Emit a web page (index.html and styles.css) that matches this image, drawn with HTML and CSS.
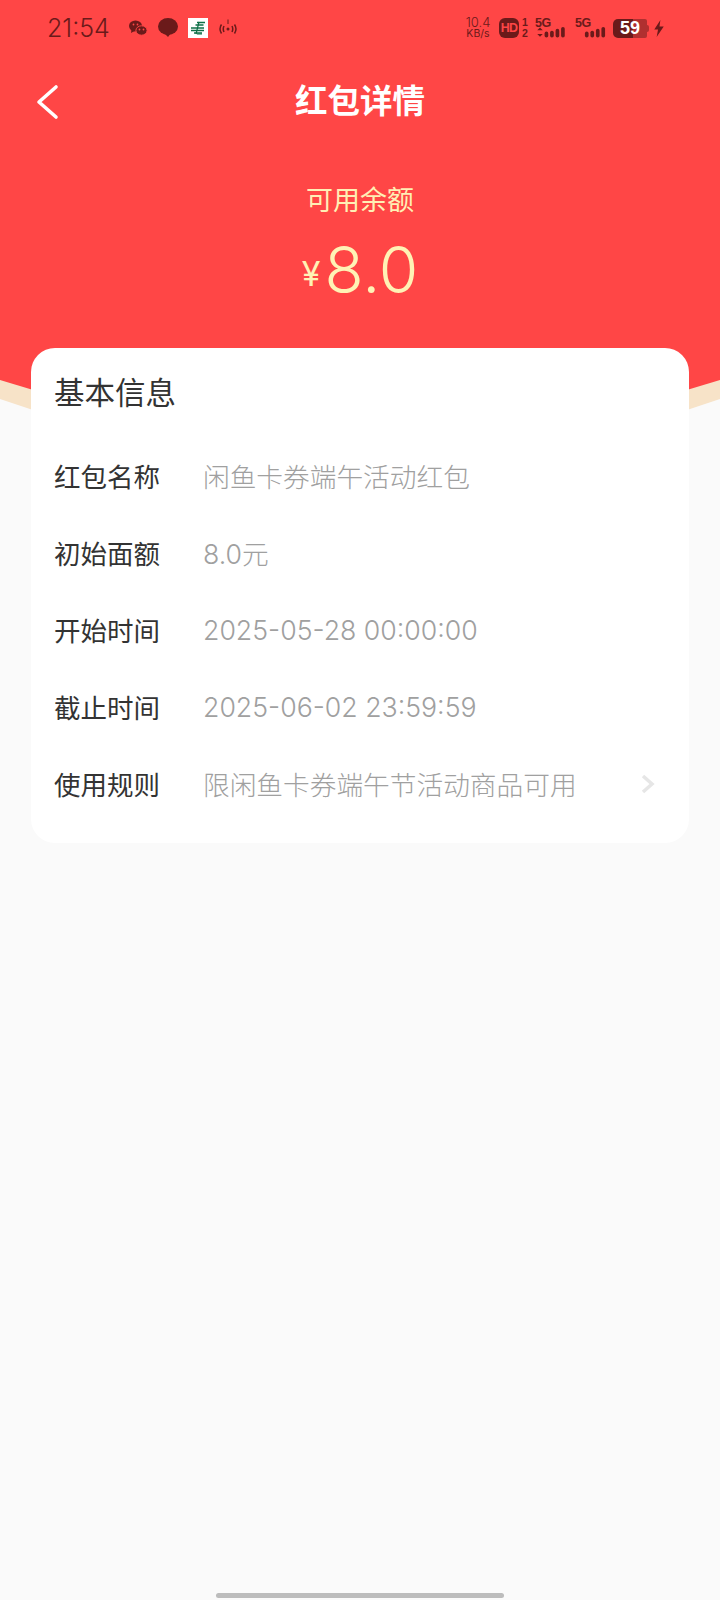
FILE: index.html
```html
<!DOCTYPE html>
<html lang="zh-CN">
<head>
<meta charset="utf-8">
<title>红包详情</title>
<link rel="stylesheet" href="styles.css">
</head>
<body>
<div class="page">
  <svg class="backdrop" width="720" height="420" viewBox="0 0 720 420" aria-hidden="true">
    <rect x="0" y="0" width="720" height="420" fill="#fafafa"/>
    <path d="M0 399 Q360 525 720 399 V300 H0 Z" fill="#f7e3c8"/>
    <path d="M0 380 Q360 495 720 380 V0 H0 Z" fill="#ff4646"/>
  </svg>
  <header class="hero">
    <div class="status">
      <div class="status-left">
        <span class="clock">21:54</span>
        <svg class="ic wechat" width="20" height="18" viewBox="0 0 20 18"><ellipse cx="7.5" cy="7" rx="6.5" ry="5.6" fill="#6b1a1a"/><path d="M3.5 10.5 3 14l3.5-2z" fill="#6b1a1a"/><ellipse cx="13.5" cy="11.5" rx="5.6" ry="4.7" fill="#6b1a1a" stroke="#ff4646" stroke-width="1"/><circle cx="11.5" cy="10.5" r=".9" fill="#ff4646"/><circle cx="15.5" cy="10.5" r=".9" fill="#ff4646"/><circle cx="5.5" cy="5.5" r=".9" fill="#ff4646"/><circle cx="9.5" cy="5.5" r=".9" fill="#ff4646"/></svg>
        <svg class="ic bubble" width="20" height="20" viewBox="0 0 20 20"><ellipse cx="10" cy="8.5" rx="10" ry="8.5" fill="#6b1a1a"/><path d="M6 15l4 4 3-4z" fill="#6b1a1a"/></svg>
        <svg class="ic post" width="20" height="20" viewBox="0 0 20 20"><rect width="20" height="20" fill="#fff"/><path d="M9 4.500h8M7.500 7h8M3 10h13M3 12.500h13M6 15h8" stroke="#0f7048" stroke-width="1.600" fill="none"/><path d="M11 4 8 16M9 16h5" stroke="#0f7048" stroke-width="1.200" fill="none"/></svg>
        <svg class="ic radio" width="20" height="20" viewBox="0 0 20 20"><path d="M3.500 6.500Q.5 11 3.500 15.500M6 8Q4.500 11 6 14M14 8Q15.500 11 14 14M16.500 6.500Q19.500 11 16.500 15.500" stroke="#6b1a1a" stroke-width="1.500" fill="none"/><circle cx="10" cy="11" r="1.500" fill="#6b1a1a"/><path d="M10 1.500V6" stroke="#6b1a1a" stroke-width="1"/></svg>
      </div>
      <div class="status-right">
        <span class="speed"><span>10.4</span><span>KB/s</span></span>
        <span class="hd">HD</span>
        <span class="sim"><span>1</span><span>2</span></span>
        <span class="signal first">
          <span class="g5">5G</span>
          <svg width="32" height="12" viewBox="0 0 32 12"><path d="M1 3.500h6L4 .5zM1 7.500h6l-3 3z" fill="#6b1a1a"/><rect x="9" y="5" width="4" height="6.500" rx="2" fill="#6b1a1a"/><rect x="15" y="4" width="4" height="7.500" rx="2" fill="#6b1a1a"/><rect x="21" y="2" width="4" height="9.500" rx="2" fill="#6b1a1a"/><rect x="27" y="0" width="4" height="11.500" rx="2" fill="#6b1a1a"/></svg>
        </span>
        <span class="signal second">
          <span class="g5">5G</span>
          <svg class="bars" width="24" height="12" viewBox="0 0 24 12"><rect x="1" y="5" width="4" height="6.500" rx="2" fill="#6b1a1a"/><rect x="7" y="4" width="4" height="7.500" rx="2" fill="#6b1a1a"/><rect x="13" y="2" width="4" height="9.500" rx="2" fill="#6b1a1a"/><rect x="19" y="0" width="4" height="11.500" rx="2" fill="#6b1a1a"/></svg>
        </span>
        <span class="battery"><span class="level">59</span></span>
        <span class="nub"></span>
        <svg class="bolt" width="10" height="17" viewBox="0 0 10 18"><path d="M6.500 0 0 10h4l-1.500 8L10 7H5.500z" fill="#6b1a1a"/></svg>
      </div>
    </div>
    <div class="nav">
      <svg class="back" width="26" height="40" viewBox="0 0 26 40"><path d="M22 5 5 20l17 15" stroke="#fff" stroke-width="3.600" stroke-linecap="round" stroke-linejoin="round" fill="none"/></svg>
      <h1 class="title">红包详情</h1>
    </div>
    <div class="balance">
      <p class="balance-label">可用余额</p>
      <p class="amount"><span class="yen">¥</span><span class="num">8.0</span></p>
    </div>
  </header>
  <section class="card">
    <h2 class="card-title">基本信息</h2>
    <div class="row"><span class="label">红包名称</span><span class="value">闲鱼卡券端午活动红包</span></div>
    <div class="row"><span class="label">初始面额</span><span class="value">8.0元</span></div>
    <div class="row"><span class="label">开始时间</span><span class="value">2025-05-28 00:00:00</span></div>
    <div class="row"><span class="label">截止时间</span><span class="value">2025-06-02 23:59:59</span></div>
    <div class="row"><span class="label">使用规则</span><span class="value">限闲鱼卡券端午节活动商品可用</span>
      <svg class="chev" width="14" height="20" viewBox="0 0 14 20"><path d="M2 2l9 8-9 8" stroke="#e6e6e6" stroke-width="3.500" fill="none"/></svg>
    </div>
  </section>
  <div class="home-bar"></div>
</div>
</body>
</html>
```

FILE: styles.css
```css
* { box-sizing: border-box; }
html, body { margin: 0; padding: 0; }
body { background: #fafafa; font-family: "Noto Sans CJK SC", "Noto Sans", sans-serif; }
.page { position: relative; width: 720px; height: 1600px; overflow: hidden; background: #fafafa; }
.backdrop { position: absolute; left: 0; top: 0; }
.hero { position: relative; height: 348px; }
.status { display: flex; justify-content: space-between; align-items: center; height: 58px; padding: 0 56px 2px 47px; color: #6b1a1a; }
.status-left { display: flex; align-items: center; }
.clock { width: 81px; font-family: Inter, Roboto, sans-serif; font-size: 25px; font-weight: 300; }
.ic { display: block; }
.wechat, .bubble, .post { margin-right: 10px; }
.status-right { display: flex; align-items: center; }
.speed { display: flex; flex-direction: column; align-items: center; width: 28px; margin-right: 7px; font-family: Inter, Roboto, sans-serif; line-height: 11px; }
.speed span:first-child { font-size: 13px; font-weight: 300; }
.speed span:last-child { font-size: 10.500px; }
.hd { width: 20px; height: 20px; border-radius: 6px; background: #6b1a1a; color: #ff4646; font: 700 12.500px/20px "Liberation Sans", sans-serif; letter-spacing: -.8px; text-align: center; }
.sim { display: flex; flex-direction: column; align-items: center; width: 6px; margin-left: 3px; font: 700 10.500px/11px "Liberation Sans", sans-serif; }
.signal { display: flex; flex-direction: column; align-items: flex-start; width: 32px; height: 20px; }
.signal svg { display: block; margin-top: -1px; }
.first { margin-left: 7px; }
.second { margin-left: 8px; }
.second .bars { margin-left: 8px; }
.g5 { font: 700 12.500px/10px "Liberation Sans", sans-serif; letter-spacing: -.5px; }
.battery { display: flex; justify-content: center; align-items: center; width: 34px; height: 19px; margin-left: 6px; border-radius: 5px 2px 2px 5px; background: linear-gradient(90deg, #6b1a1a 0, #6b1a1a 59%, #b03030 59%, #b03030 100%); }
.level { color: #fff; font: 700 18px/19px "Liberation Sans", sans-serif; }
.nub { width: 2px; height: 7px; margin-right: 5px; border-radius: 0 2px 2px 0; background: #b03030; }
.bolt { display: block; }
.nav { position: relative; display: flex; justify-content: center; align-items: center; height: 82px; }
.back { position: absolute; left: 34px; top: 24px; }
.title { margin: 0; color: #fff; font-size: 32.500px; font-weight: 700; line-height: 82px; }
.balance { display: flex; flex-direction: column; align-items: center; margin-top: 39px; }
.balance-label { margin: 0; color: #ffefb5; font-size: 27px; line-height: 40px; }
.amount { display: flex; align-items: center; height: 76px; margin: 12px 0 0; color: #fff2b5; }
.yen { margin: 8px 4px 0 0; font-family: Inter, Roboto, sans-serif; font-size: 34px; }
.num { font-family: Inter, Roboto, sans-serif; font-size: 64px; font-weight: 350; }
.card { position: relative; width: 658px; height: 495px; margin-left: 31px; padding: 20px 23px 0; background: #fff; border-radius: 24px; }
.card-title { margin: 0 0 23px; height: 46px; color: #333; font-size: 30.500px; font-weight: 400; line-height: 46px; }
.row { display: flex; align-items: center; height: 77px; }
.label { width: 149px; color: #333; font-size: 26.500px; }
.value { color: #a0a0a0; font-size: 26.700px; font-family: Inter, "Noto Sans CJK SC", sans-serif; font-weight: 300; }
.chev { margin-left: auto; margin-right: 11px; }
.home-bar { position: absolute; left: 216px; bottom: 2px; width: 288px; height: 5px; border-radius: 3px; background: #bcbcbc; }
```
